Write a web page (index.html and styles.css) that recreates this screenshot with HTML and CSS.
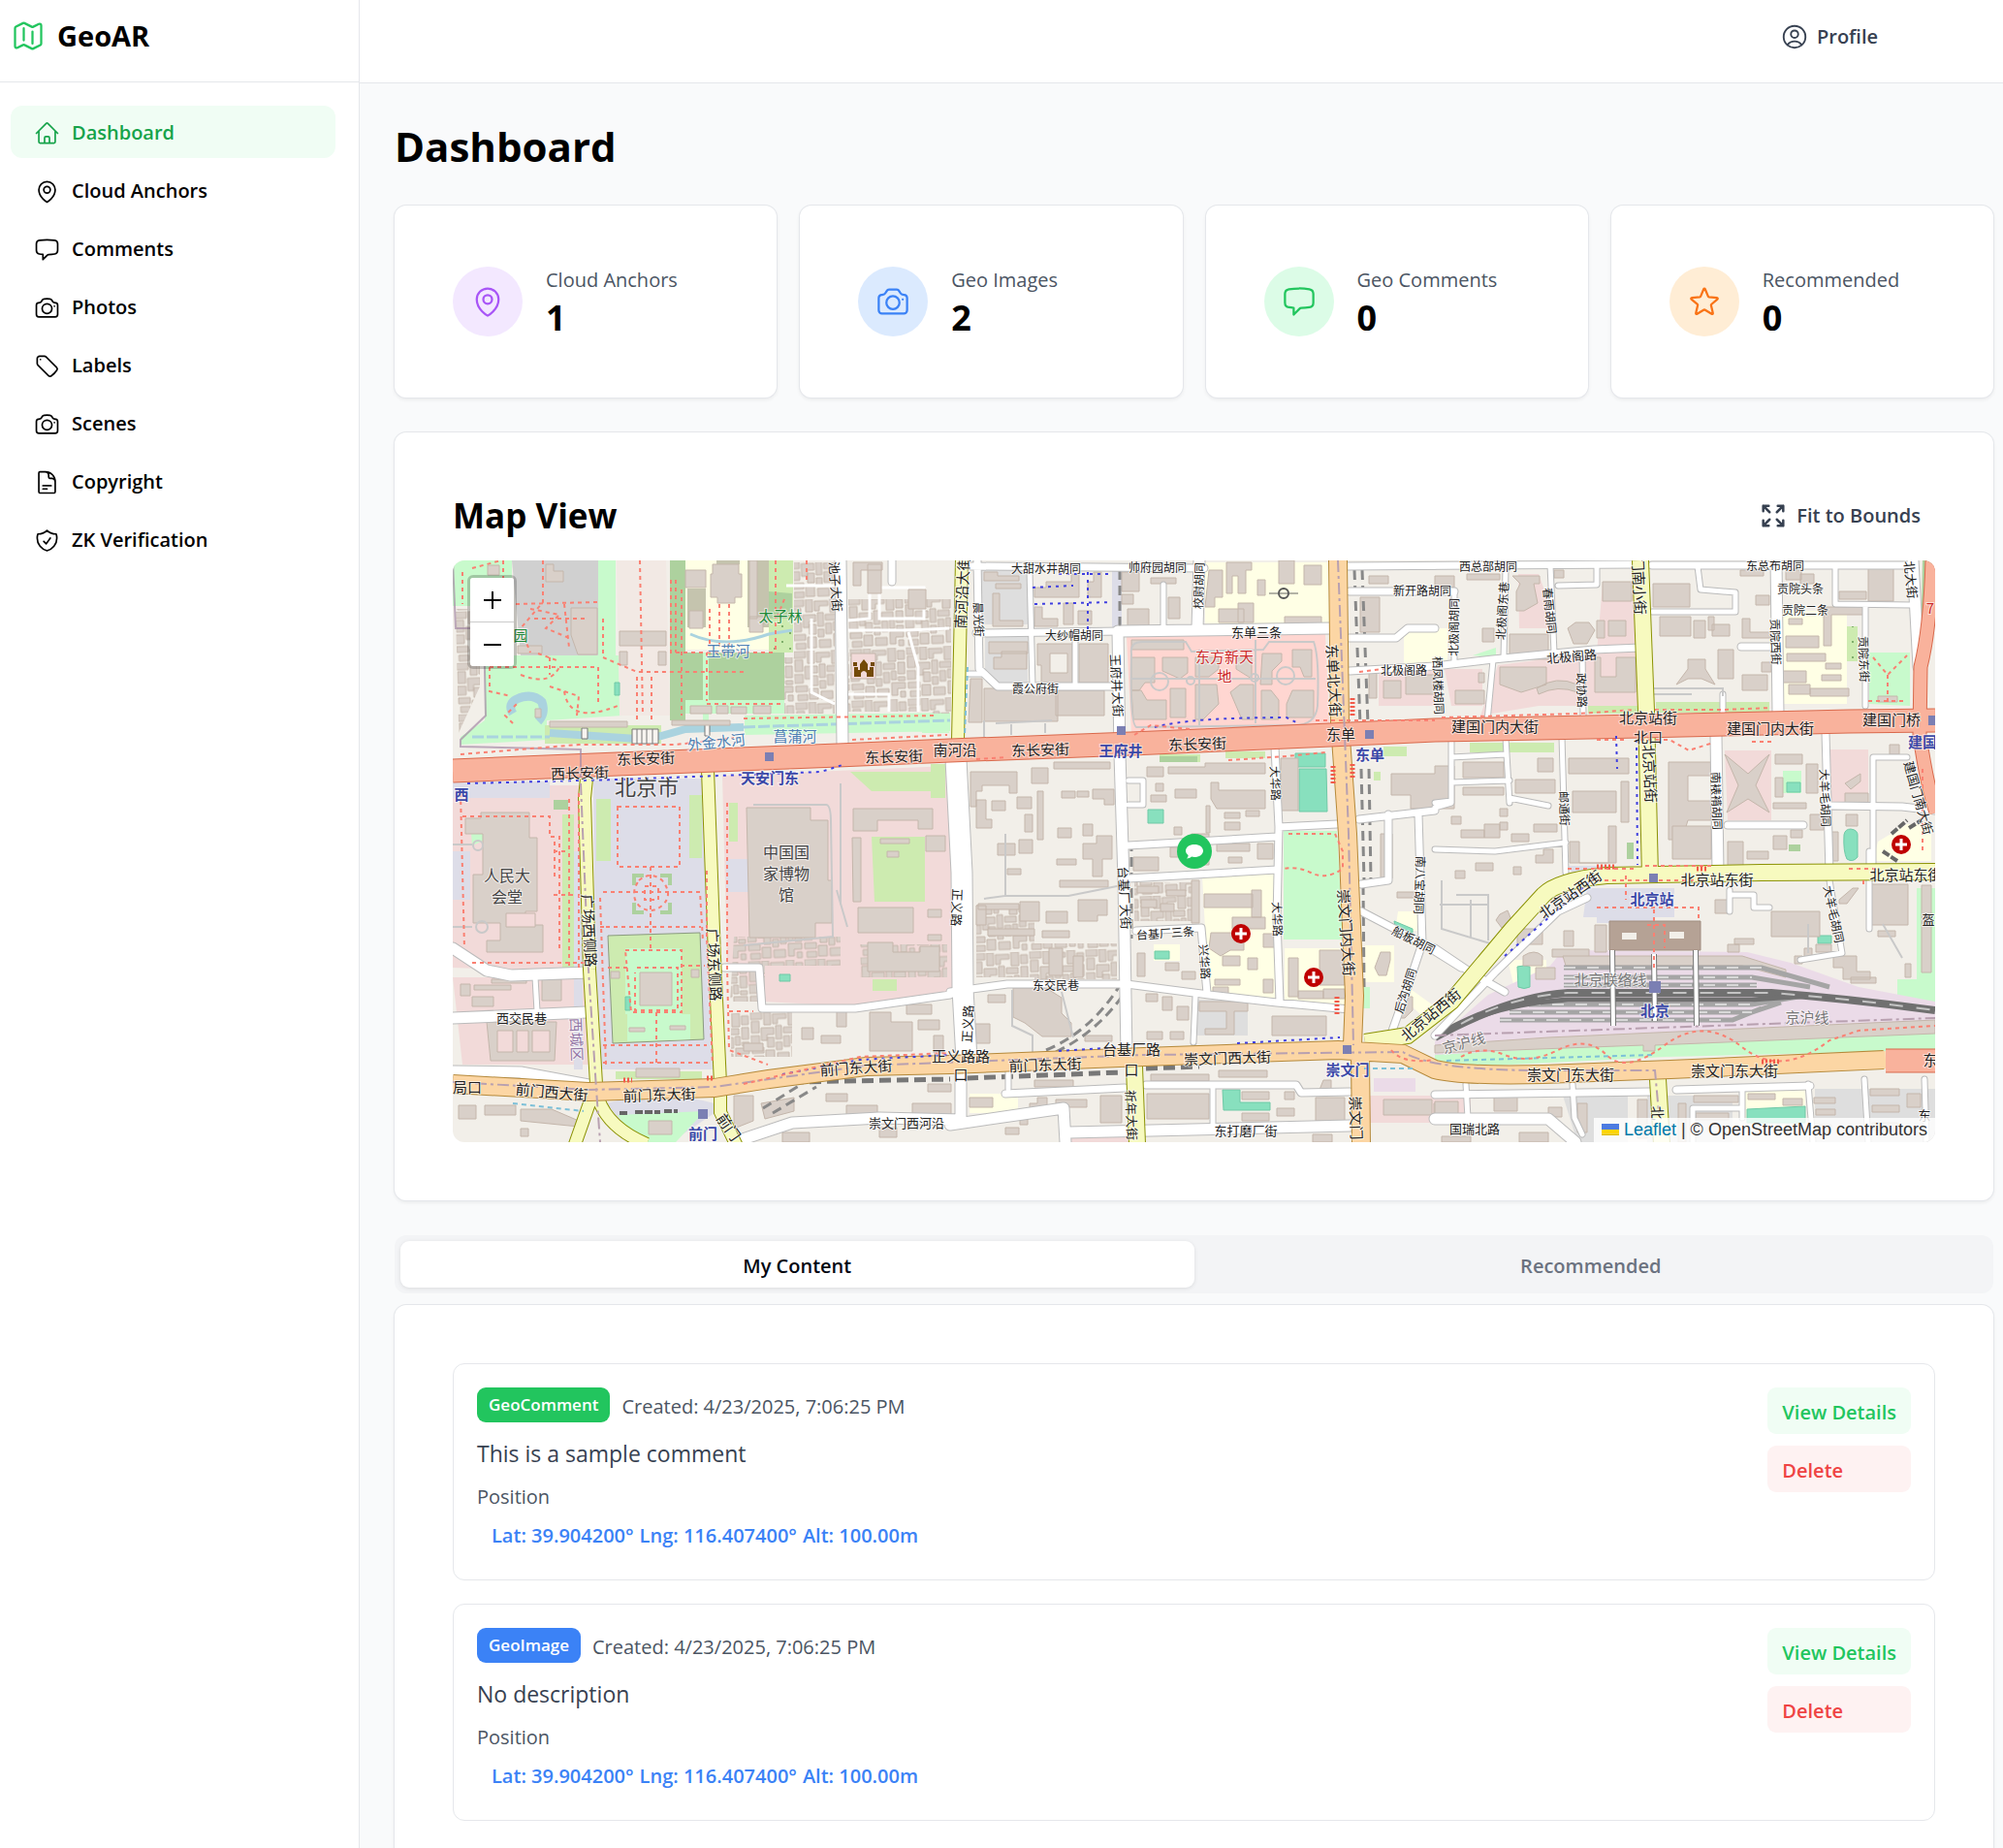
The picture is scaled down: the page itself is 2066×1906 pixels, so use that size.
FILE: index.html
```html
<!DOCTYPE html>
<html lang="en">
<head>
<meta charset="utf-8">
<meta name="viewport" content="width=device-width, initial-scale=1">
<title>GeoAR Dashboard</title>
<link rel="stylesheet" href="styles.css">
</head>
<body>
<svg class="sprite" aria-hidden="true">
  <symbol id="i-map" viewBox="0 0 24 24"><path d="M9 6.75V15m6-6v8.25m.503 3.498 4.875-2.437c.381-.19.622-.58.622-1.006V4.82c0-.836-.88-1.38-1.628-1.006l-3.869 1.934c-.317.159-.69.159-1.006 0L9.503 3.252a1.125 1.125 0 0 0-1.006 0L3.622 5.689C3.24 5.88 3 6.27 3 6.695V19.18c0 .836.88 1.38 1.628 1.006l3.869-1.934c.317-.159.69-.159 1.006 0l4.994 2.497c.317.158.69.158 1.006 0Z"/></symbol>
  <symbol id="i-home" viewBox="0 0 24 24"><path d="m2.25 12 8.954-8.955c.44-.439 1.152-.439 1.591 0L21.75 12M4.5 9.75v10.125c0 .621.504 1.125 1.125 1.125H9.75v-4.875c0-.621.504-1.125 1.125-1.125h2.25c.621 0 1.125.504 1.125 1.125V21h4.125c.621 0 1.125-.504 1.125-1.125V9.75M8.25 21h8.25"/></symbol>
  <symbol id="i-pin" viewBox="0 0 24 24"><path d="M15 10.5a3 3 0 1 1-6 0 3 3 0 0 1 6 0Z"/><path d="M19.5 10.5c0 7.142-7.5 11.25-7.5 11.25S4.5 17.642 4.5 10.5a7.5 7.5 0 1 1 15 0Z"/></symbol>
  <symbol id="i-chat" viewBox="0 0 24 24"><path d="M2.25 12.76c0 1.6 1.123 2.994 2.707 3.227 1.087.16 2.185.283 3.293.369V21l4.076-4.076a1.526 1.526 0 0 1 1.037-.443 48.282 48.282 0 0 0 5.68-.494c1.584-.233 2.707-1.626 2.707-3.228V6.741c0-1.602-1.123-2.995-2.707-3.228A48.394 48.394 0 0 0 12 3c-2.392 0-4.744.175-7.043.513C3.373 3.746 2.25 5.14 2.25 6.741v6.018Z"/></symbol>
  <symbol id="i-camera" viewBox="0 0 24 24"><path d="M6.827 6.175A2.31 2.31 0 0 1 5.186 7.23c-.38.054-.757.112-1.134.175C2.999 7.58 2.25 8.507 2.25 9.574V18a2.25 2.25 0 0 0 2.25 2.25h15A2.25 2.25 0 0 0 21.75 18V9.574c0-1.067-.75-1.994-1.802-2.169a47.865 47.865 0 0 0-1.134-.175 2.31 2.31 0 0 1-1.64-1.055l-.822-1.316a2.192 2.192 0 0 0-1.736-1.039 48.774 48.774 0 0 0-5.232 0 2.192 2.192 0 0 0-1.736 1.039l-.821 1.316Z"/><path d="M16.5 12.75a4.5 4.5 0 1 1-9 0 4.5 4.5 0 0 1 9 0ZM18.75 10.5h.008v.008h-.008V10.5Z"/></symbol>
  <symbol id="i-tag" viewBox="0 0 24 24"><path d="M9.568 3H5.25A2.25 2.25 0 0 0 3 5.25v4.318c0 .597.237 1.17.659 1.591l9.581 9.581c.699.699 1.78.872 2.607.33a18.095 18.095 0 0 0 5.223-5.223c.542-.827.369-1.908-.33-2.607L11.16 3.66A2.25 2.25 0 0 0 9.568 3Z"/><path d="M6 6h.008v.008H6V6Z"/></symbol>
  <symbol id="i-doc" viewBox="0 0 24 24"><path d="M19.5 14.25v-2.625a3.375 3.375 0 0 0-3.375-3.375h-1.5A1.125 1.125 0 0 1 13.5 7.125v-1.5a3.375 3.375 0 0 0-3.375-3.375H8.25m0 12.75h7.5m-7.5 3H12M10.5 2.25H5.625c-.621 0-1.125.504-1.125 1.125v17.25c0 .621.504 1.125 1.125 1.125h12.75c.621 0 1.125-.504 1.125-1.125V11.25a9 9 0 0 0-9-9Z"/></symbol>
  <symbol id="i-shield" viewBox="0 0 24 24"><path d="M9 12.75 11.25 15 15 9.75m-3-7.036A11.959 11.959 0 0 1 3.598 6 11.99 11.99 0 0 0 3 9.749c0 5.592 3.824 10.29 9 11.623 5.176-1.332 9-6.03 9-11.622 0-1.31-.21-2.571-.598-3.751h-.152c-3.196 0-6.1-1.248-8.25-3.285Z"/></symbol>
  <symbol id="i-user" viewBox="0 0 24 24"><path d="M17.982 18.725A7.488 7.488 0 0 0 12 15.75a7.488 7.488 0 0 0-5.982 2.975m11.963 0a9 9 0 1 0-11.963 0m11.963 0A8.966 8.966 0 0 1 12 21a8.966 8.966 0 0 1-5.982-2.275M15 9.75a3 3 0 1 1-6 0 3 3 0 0 1 6 0Z"/></symbol>
  <symbol id="i-star" viewBox="0 0 24 24"><path d="M11.48 3.499a.562.562 0 0 1 1.04 0l2.125 5.111a.563.563 0 0 0 .475.345l5.518.442c.499.04.701.663.321.988l-4.204 3.602a.563.563 0 0 0-.182.557l1.285 5.385a.562.562 0 0 1-.84.61l-4.725-2.885a.562.562 0 0 0-.586 0L6.982 20.54a.562.562 0 0 1-.84-.61l1.285-5.386a.562.562 0 0 0-.182-.557l-4.204-3.602a.562.562 0 0 1 .321-.988l5.518-.442a.563.563 0 0 0 .475-.345L11.48 3.5Z"/></symbol>
  <symbol id="i-expand" viewBox="0 0 24 24"><path d="M3.75 3.75v4.5m0-4.5h4.5m-4.5 0L9 9M3.75 20.25v-4.5m0 4.5h4.5m-4.5 0L9 15M20.25 3.75h-4.5m4.5 0v4.5m0-4.5L15 9m5.25 11.25h-4.5m4.5 0v-4.5m0 4.5L15 15"/></symbol>
</svg>

<div class="app">
  <aside class="sidebar">
    <a class="brand" href="#"><svg class="icon icon-lg"><use href="#i-map"/></svg><span>GeoAR</span></a>
    <nav class="nav" aria-label="Main">
      <a class="nav-item is-active" href="#" aria-current="page"><svg class="icon icon-nav"><use href="#i-home"/></svg>Dashboard</a>
      <a class="nav-item" href="#"><svg class="icon icon-nav"><use href="#i-pin"/></svg>Cloud Anchors</a>
      <a class="nav-item" href="#"><svg class="icon icon-nav"><use href="#i-chat"/></svg>Comments</a>
      <a class="nav-item" href="#"><svg class="icon icon-nav"><use href="#i-camera"/></svg>Photos</a>
      <a class="nav-item" href="#"><svg class="icon icon-nav"><use href="#i-tag"/></svg>Labels</a>
      <a class="nav-item" href="#"><svg class="icon icon-nav"><use href="#i-camera"/></svg>Scenes</a>
      <a class="nav-item" href="#"><svg class="icon icon-nav"><use href="#i-doc"/></svg>Copyright</a>
      <a class="nav-item" href="#"><svg class="icon icon-nav"><use href="#i-shield"/></svg>ZK Verification</a>
    </nav>
  </aside>

  <div class="page">
    <header class="topbar">
      <button class="profile" type="button"><svg class="icon icon-md"><use href="#i-user"/></svg>Profile</button>
    </header>

    <main class="main">
      <h1 class="page-title">Dashboard</h1>

      <section class="stats" aria-label="Statistics">
        <div class="card stat"><span class="bubble purple"><svg class="icon icon-lg"><use href="#i-pin"/></svg></span><div class="stat-text"><p class="stat-label">Cloud Anchors</p><p class="stat-value">1</p></div></div>
        <div class="card stat"><span class="bubble blue"><svg class="icon icon-lg"><use href="#i-camera"/></svg></span><div class="stat-text"><p class="stat-label">Geo Images</p><p class="stat-value">2</p></div></div>
        <div class="card stat"><span class="bubble green"><svg class="icon icon-lg"><use href="#i-chat"/></svg></span><div class="stat-text"><p class="stat-label">Geo Comments</p><p class="stat-value">0</p></div></div>
        <div class="card stat"><span class="bubble orange"><svg class="icon icon-lg"><use href="#i-star"/></svg></span><div class="stat-text"><p class="stat-label">Recommended</p><p class="stat-value">0</p></div></div>
      </section>

      <section class="card map-card">
        <div class="map-head">
          <h2 class="section-title">Map View</h2>
          <button class="fit" type="button"><svg class="icon icon-md icon-bold"><use href="#i-expand"/></svg>Fit to Bounds</button>
        </div>
        <div class="map">
          <svg class="tiles" viewBox="0 0 1529 600" preserveAspectRatio="xMidYMid slice" role="img" aria-label="Street map of central Beijing">
            <defs>
              <pattern id="hutong" width="58" height="53" patternUnits="userSpaceOnUse" patternTransform="rotate(-2)">
                <path class="bld" d="M0 0h12v7h-12zM14 0h7v13h-7zM23 2h14v5h-9v5h-5zM39 0h8v14h-8zM49 3h7v9h-7zM1 9h8v12h-8zM11 16h13v7h-7v6h-6zM26 14h6v14h-6zM34 16h12v6h-12zM49 15h7v12h-7zM0 24h9v9h-9zM17 26h7v10h-7zM34 25h6v11h-6zM42 24h5v9h-5zM26 31h6v8h-6zM1 36h12v6h-12zM15 39h9v11h-9zM42 36h14v6h-8v7h-6zM27 42h12v8h-12zM49 30h7v4h-7zM3 45h10v6h-10zM51 45h5v6h-5z"/>
              </pattern>
              <pattern id="trees" width="16" height="16" patternUnits="userSpaceOnUse">
                <path fill="#7fae6b" d="M3 3h2v2h-2zM11 10h2v2h-2z"/>
              </pattern>
              <g id="r5">
                <path d="M595 10L598 130M642 80V128M528 117H545M733 25V72M1033 32V107M1086 8L1084 100M1132 5L1136 95M1073 103L1067 166M1165 95L1166 160M1237 53H1323V33L1287 30 1284 6M1310 138V160M1426 5V45L1505 46M1457 48V150M1030 185V250L1013 255M1086 183L1090 250M1144 182L1148 322M1030 203L1086 200M1030 229L1090 227M1013 298L1075 300 1148 291M1090 245L1130 253M1465 320V203H1500M1420 330L1433 405 1390 412M1461 300V380M1317 340V362M1318 345H1342V358H1358M1045 540L1047 575M1155 540L1157 575 1165 592M1330 545V575M1279 600V565H1330M1398 540L1403 600M1456 535L1460 600M1518 535L1520 600M697 227H712V252H697M85 430L87 465M766 450L764 497M784 545V588M573 525V545M1180 4V25L1140 26M936 6H1013M1013 250L1030 248"/>
              </g>
              <g id="r7">
                <path d="M535 6L775 8M541 0L543 112 562 130H684M540 75L690 73M922 6L1222 4M1237 5H1506M925 32H1033M925 80H973L985 70H1013M925 114L1013 109 1073 102 1177 92 1225 90M1329 89H1362M1416 178L1420 322M1315 273H1393M1422 253L1495 254 1529 258M1013 400L1050 425 1085 445M1013 490L1075 425 1140 362 1170 348M848 193L852 275 850 370 853 455M852 275L912 272M697 294L850 285M697 328L850 319M935 267L1013 258M965 262V330L937 334M513 445L572 437H695L780 448 850 456 925 463M705 382L772 379 778 446M996 262L1000 395 985 440 968 488M937 362L1000 395 1040 420M570 550L693 544M715 541H870L875 549 925 548M280 420H316L319 462H415L513 448M1013 551L1235 548M1262 546L1400 542M453 0V22"/>
              </g>
              <g id="r11">
                <path d="M686 73L688 200 692 330 695 510M690 73L905 70M770 0L768 70M400 0L402 190M1365 0L1367 158M1506 0L1512 110M1303 180L1305 322M0 400L35 423 60 428 140 425M0 472L138 466M0 527L70 528 140 541M290 600L350 580 440 575 525 577M524 530V580M513 582L630 565 632 600M635 590L925 583M1013 576H1130L1158 600"/>
              </g>
            </defs>

            <rect width="1529" height="600" fill="#f2efe9"/>

            <!-- land use -->
            <path fill="#f2dad9" d="M0 232H132L142 425 0 420zM0 430H140L146 520H10zM278 222L512 212 517 445 415 460 320 455 283 415zM1099 14H1120L1140 70H1100zM1186 24H1222V150H1120L1060 160 1078 108 1180 95zM1023 112H1062V150H1030zM955 110H1013V150H955zM1312 196H1360V268H1315zM1420 195H1460V250H1422zM945 552H1050V580H945zM632 588H700V600H632zM1013 555H1042V574H1013z"/>
            <path fill="#dddde8" d="M145 225H262L270 525H148zM125 300H134V525H125zM0 300H18V350H0zM158 560Q215 545 270 560V570L225 600H190zM282 308H306V342H282zM1170 338H1260V368H1240V374H1180V368H1166zM680 8H690V70H680zM1150 315H1200V325L1160 330zM0 228H100V245H0z"/>
            <path fill="#c8facc" d="M0 0H61V47H0zM33 98H172L175 160 97 165V185L8 190V182L33 165zM150 0H168V98H150zM301 160L513 157V176L301 180zM857 279L912 279 918 391H857zM1461 95H1503V150L1461 148zM1052 98L1076 90V100zM1372 217H1391V240H1372zM1510 338H1529V455H1490V432H1510zM1013 505L1529 482V505L1250 512 1013 524zM170 572L260 568 230 600H190zM484 160H512V178H484zM935 440H946V462H935zM18 268H34V288L20 294z"/>
            <path fill="#cdebb0" d="M326 0H351V95H326zM113 262H125V430H113zM148 246H163V310H148zM244 242H257V307H244zM432 285H487V352H435zM410 218H500V238H432zM285 250H294V290H285zM763 173L880 168V174H763zM729 200H771V208H729zM797 197H838V204H797zM433 432H458V444H433zM493 210H508V245H493zM960 192H984V202H960zM1049 188H1136V198H1049zM1171 150H1230V158H1171zM1241 146H1358V157H1241zM1425 68H1449V104H1425zM95 170H215V189H95zM168 527H257V535H168zM950 218H957V227H950z"/>
            <path fill="#cdebb0" stroke="#8a9a80" d="M160 387L255 384 259 494 165 498z"/>
            <path fill="#c8facc" d="M178 400H236V468H245V494L180 496V468H178z"/>
            <path fill="#add19e" d="M185 323h12v4h-8v8h-4zM226 323h-12v4h8v8h4zM185 365h12v-4h-8v-8h-4zM226 365h-12v-4h8v-8h4z"/>
            <path fill="#add19e" d="M224 0H240V165H224zM224 95H342V145H224zM1516 0H1526V60L1514 90zM104 247H119V257H104zM729 202H768V208H729zM1378 293H1390V300H1378zM1211 291H1218V308H1211zM326 32L350 34V60H326z"/>
            <path fill="#c8facc" d="M258 95H264V165H258zM240 144H342V158H240z"/>
            <rect x="1425" y="68" width="24" height="36" fill="url(#trees)"/>
            <rect x="328" y="64" width="22" height="30" fill="url(#trees)"/>
            <path fill="#d0d0d0" d="M61 0H150V98H70z"/>
            <path fill="#dedede" d="M545 10H593V66H545zM549 76H593V130H560L549 112zM769 453H820V490H766zM1145 552H1212V600H1160zM1232 552H1320V600H1232zM1405 545H1529V600H1405z"/>
            <path fill="#f2e9e4" d="M169 0H220L224 160H172z"/>
            <path fill="#ffffe5" d="M240 0H326V92H240zM776 2H905V65H776zM981 70H1026V107H981zM773 326L848 322V452H780zM858 400H920V460H858zM941 397H971V435H941zM723 396H750V413H723zM533 550H583V570H533zM1363 52H1438V148H1370zM1332 545H1395V575H1332zM1470 290L1500 272H1525V310H1465zM1088 412H1128V445H1096zM985 440L1010 458 1000 470 984 455zM975 362H996V382H972z"/>
            <path fill="#c5c4ae" d="M242 29H261V69H242zM304 0H326V69H304zM272 0H296V4H272z"/>
            <path fill="#ffd6d1" d="M695 79L900 74 904 168 700 180z"/>
            <path fill="#ebdbe8" d="M1013 496L1068 448 1132 418 1145 402 1335 404 1380 415 1450 440 1529 455V482L1013 510zM950 534H993V548H950z"/>
            <path fill="#88e0be" stroke="#6fc9a6" d="M869 199H900V213H869zM873 215H901L902 259H873zM717 257H733V271H717zM724 403H739V411H724zM794 546H812V559H843V567H795zM1098 419Q1105 417 1111 419V440Q1105 443 1099 440zM1435 283Q1436 277 1442 277Q1450 278 1449 285V306Q1444 312 1438 308Q1434 300 1435 283zM1335 566L1395 563V580H1335zM1376 229H1390V239H1376zM1408 387H1422V395H1408zM337 427H348V434H337zM178 450H183V464H178zM971 372L990 380V384L972 378zM167 126H172V139H167z"/>

            <!-- water -->
            <g fill="none" stroke="#aad3df">
              <path stroke-width="8" d="M100 178L190 184 215 181 240 174 300 172"/>
              <path stroke-width="3" d="M300 172L513 165M20 182H100" stroke-dasharray="12 3"/>
              <path stroke-width="3" d="M245 76Q280 92 326 76L350 72"/>
              <path stroke-width="9" d="M62 158Q56 148 66 143Q82 136 92 146Q96 158 88 166"/>
            </g>
            <path fill="#f7f4f0" stroke="#777" d="M185 174h27v15h-27zM133 173h6v11h-6zM260 168h5v13h-5z"/>
            <path stroke="#777" d="M190 174v15M195 174v15M200 174v15M206 174v15"/>

            <!-- dense courtyards -->
            <path fill="url(#hutong)" d="M352 2H394V158H342V100H352zM408 40H514V156H408zM494 60H512V158H494zM3 50H28V130L6 178zM290 388H400V418H322V455H286zM420 396H510V430H420zM287 466H350V512H287zM540 355H600V430H540zM600 395H685V432H600zM703 332H770V372H703z"/>
            <path fill="none" stroke="#fff" stroke-width="3" d="M408 72H470L512 70M344 26H394M370 60V136L394 148M408 62L430 60V34M470 74L480 110V156M408 138H450V156M440 28H486V60H440z"/>
            <path fill="#f2dad9" stroke="#c4b6ab" d="M411 96H436V122H411z"/>

            <!-- buildings -->
            <path class="bld" d="M96 4h8v7h10v11h-18zM122 49h27v48h-20l-7-20zM67 88h25v8h-25zM172 73h48v15h-48zM268 4h27v10h3v24h-7v6h-18v-6h-7v-24h2zM240 10h21v18h-21zM306 0h8v60h-8zM244 52h14v18h-14zM306 58h14v16h-14zM245 150h22v8h-22zM272 150h12v8h-12zM287 151h16v7h-16zM310 150h18v8h-18zM413 2h30v8h-22v16h-8zM428 4h14v30h-14zM470 30h18v20h-18zM100 166h80v6h-80zM226 165h60v5h-60zM36 5h12v10h-12zM172 94h8v14h-8zM212 94h8v14h-8zM85 153h6v9h-6z"/>
            <path class="bld" d="M13 266h16v-6h50v26h8v76h-12v14h18v28h-58v-12h14v-18h-28v-50h10v-42h-18zM303 255h66v13h18v62h4v44h-17v15h-68zM413 256h82v21h-15v-9h-42v11h-25zM412 286h9v66h-8zM418 358h57v26h-57zM441 287h30v5h-30zM448 300h12v6h-12zM490 360h14v8h-14zM490 386h14v6h-14zM488 284h20v16h-20zM428 394h26v10h28v-6h20v26h-74zM193 425h33v34h-33zM35 476h72l-2 40h-66zM8 437h10v12h-10zM22 438h38v5h-38zM40 432h36v4h-36zM20 450h22v10h-22zM92 432h20v22h-20zM189 524h45v9h-45zM430 466h22v10h22v30h-44zM468 458h26v10h-26zM480 474h22v10h-22zM496 490h10v18h-10zM300 498h20v8h-20zM360 482h12v12h-12zM380 490h20v8h-20zM396 465h10v16h-10zM6 562h18v14h-18zM33 562h32v10h-32zM70 566h32l28 12v6l-60-6zM70 586h8v8h-8zM202 578h24v14h-24zM290 552h20v26l-20 8zM318 560l34-6v14l-30 8zM340 590h28v10h-28zM406 562h32v10h-32zM385 550h22v8h-22zM474 560h40v12h-40zM440 585h18v10h-18zM490 540h24v8h-24zM163 424h9v7h-9zM246 422h8v8h-8zM182 482h16v4h-16zM224 480h16v4h-16z"/>
            <path class="bld" d="M557 34h7v28h24v6h-31zM548 12h14v4h22v5h-36zM560 24h26v5h-26zM600 28h12v-6h26v-8h8v24h-46zM655 22h6v-10h8v26h-14zM553 84h40v12h-40zM558 100h8v-6h26v18h-34zM603 86h36v42h-32v-20h-4zM646 86h30v40h-30zM534 122h12v45h-14zM548 132h76v34h-76zM622 134h50v26h-50zM690 12h18v20h-18zM696 50h22v20h-22zM720 18h26v6h-26zM738 38h12v22h-12zM690 35h12v10h-12zM600 48h8v12h16v8h-24zM630 44h10v22h-10zM645 52h14v14h-14zM780 10h14v28h-8v10h-10zM798 2h26v8h-6v24h-8v-18h-6v18h-6zM790 50h26v14h-26zM830 20h8v16h-8zM852 0h16v24h-16zM878 5h18v20h-18zM810 44h16v20h-16zM858 58h38v7h-38zM700 82h54v10h-54zM700 100h24v26h-10l-6 8h-8zM732 100h26v16l-8 6-18-8zM700 134h10l6 10h20v20h-34zM740 132h16v30h-16zM766 128h22l2 20-16 16h-8zM802 136l10-8h14v36h-12zM766 100h24v12l-10 8h-14zM808 100h16v22l-16-10zM835 96h20v8l-10 10v14h-12zM866 92h20v28h-8l-4-10h-8zM834 134h10l8 10v20h-18zM866 134h22v28h-28v-14z"/>
            <path class="bld" d="M534 218h48v22h-8v-8h-28v6h-6v16h-6zM597 214h17v16h-17zM620 208h58v7h-58zM540 247h10v20h6v9h-16zM556 248h14v10h-14zM582 244h15v12h-15zM603 238h6v50h-6zM628 238h14v7h-14zM644 238h12v6h-12zM660 236h22v16h-10v-6h-12zM590 262h8v18h-8zM624 276h14v10h-14zM650 272h10v12h-10zM562 292h18v12h-18zM584 288h14v14h-14zM623 308h20v6h-20zM650 292h14v-8h16v24h-10v18h-10v-18h-10zM572 318h14v6h-14zM626 330h50v7h-50zM542 354h42v6h-42zM540 356h10v20h-10zM585 352h20v20h-20zM612 362h22v12h-22zM645 350h30v16h-10v6h-20zM552 380h48v7h-48zM608 382h28v7h-28zM716 213h17v10h-17zM738 213h38v-4h62v11h-100zM725 230h8v8h-8zM720 242h16v7h-16zM745 236h22v9h-22zM782 229h8v8h48v19h-50l-6-10zM777 253h4v28h-4zM796 260h16v6h-16zM818 258h14v6h-14zM796 270h16v8h-16zM744 275h8v8h-8zM762 282h18v6h-18zM702 306h26v14h-26zM740 296h14v10h-14zM760 300h20v14h-20zM788 292h34v8h-34zM830 292h16v16h-16zM800 306h14v6h-14zM854 204h18v54h-18zM706 336h22v7h-22zM736 340h20v6h-20zM762 330h8v44h-8zM710 350h16v8h-16zM730 354h14v8h-14zM775 344h50v14h-50zM824 340h10v28h-10zM804 368h34v12h-34zM836 385h12v14h-12zM782 384h24l10 10v8h-14l-10 6-12-8zM794 408h18v10h-18zM820 410h10v12h-10zM786 432h26v6h-26zM836 432h10v14h-10zM706 405h8v24h-8zM735 415h14v8h-14zM752 424h14v8h-14zM784 440h16v8h-16zM862 410h10v40h-10zM872 444h26v8h-26zM894 402h26v36h-26zM898 442h22v10h-22zM957 404h10v8l-4 16h-8l-4-8zM974 342h26v6h-26zM980 450h10v14l-8 8h-6z"/>
            <path class="bld" d="M578 441h34l16 10v16l10 10v14h-30l-18-14-12-6zM552 448h18v8h-18zM538 478h16v20h-16zM640 408h10v22h-10zM615 400h14v28h-14zM715 447h12v8h-12zM732 450h10v14h-10zM747 460h12v14h-12zM716 486h16v8h-16zM740 486h14v8h-14zM770 455h50v10h-14v24h-30v-6h22v-18h-28zM845 470h56v20h-56zM652 490h28v6h-28zM533 554h24v10h-24zM595 560h8v-6h10v18h-18zM622 556h32v8h-32zM668 552h22v28h-22zM716 550h64v26h-64zM814 548h28v8h-28zM858 548h10v8h-10zM814 570h28v8h-28zM850 565h18v8h-18zM890 554h30v24h-30zM898 536h8v10h-12zM960 556h50v16h-50zM1012 560h24v12h-24zM600 536h40v7h-40zM720 530h60v7h-60zM790 526h50v7h-50zM570 585h14v7h-14zM585 574h8v8h-8zM887 592h20v8h-20z"/>
            <path class="bld" d="M945 16h20v8h-20zM936 38h20v36h-20zM1013 16h20v12h-20zM1046 14h34v6h-34zM1093 16h28v8h-6l4 20-14 8h-8v-20l4-8zM1136 10h10v8h-10zM1186 22h30v20h-30zM1238 24h38v24h-38zM1192 62h18v16h-18zM1245 58h32v20h-32zM1280 62h12v18h-12zM1299 66h18v12h-18zM1295 58h6v14h-6zM1328 10h24v6h-24zM1344 36h14v10h-14zM1330 60h8v14h22v6h-30zM1375 10h16v10h-16zM1430 32h28v8h-28zM1460 8h26v34h-26zM1390 14h14v10h-14zM1378 60h14v6h-14zM1375 78h34v12h-34zM1376 96h40v8h-40zM1414 48h44v8h-36v32h-8zM1372 114h24v12h-24zM1416 106h16v6h-16zM1412 118h20v6h-20zM1400 132h40v8h-40zM1378 128h22v10h-22zM1090 76h40v26h-40zM1150 70l8-6h14l6 8-8 14h-14zM1180 62h8v18h-8zM1080 110h48v18l-26 8-22-8zM1118 132q20-14 42-4v8q-20-8-40 2zM1178 100h6v20h16v-20h20v36h-42zM1034 134h30v14h-30zM1058 116h6v10h-6zM945 116h8v26h-8zM983 118h30v20h-30zM960 124h18v18h-18zM1262 128l12-16v-10h18v10l10 16-14-6h-14zM1305 92h16v30h-16zM1330 118h26v16h-26zM1350 105h10v10h-10zM1470 140h20v6h-20zM1062 70h12v14h-12zM968 220h45v-8h20v44h-45v-14h-20zM1042 208h42v16h-42zM1119 204h16v14h-16zM1151 204h62v16h-62zM1096 226h41v14h-41zM1042 234h42v8h-42zM1155 238h45v22h-45zM1205 228h8v42h-8zM1254 208h44v14h-24v26h24v20h-24l-6 20h-14z"/>
            <path class="bld" d="M1312 200l24 20 22-20-14 32 14 28-22-14-22 14 12-28zM1364 200h28v10h-28zM1364 224h8v20h-8zM1396 210h12v30h-12zM1436 230l16-10v8l-10 8zM1436 240h24v10h-24zM1482 190h10v10h-10zM1362 250h34v6h-34zM1315 290h16v26h-16zM1335 300h22v8h-22zM1362 284h14v14h-14zM1380 278h12v8h-12zM1400 262h14v16h-14zM1350 320h30v4h-30zM1421 280h8v30h-8zM1437 262h12v12h-12zM957 282h12v46h-12zM1040 278h24v8h-24zM1064 272h16v14h-16zM1030 264h10v8h-10zM1092 282h18v8h-18zM1080 256h8v8h-8zM1080 270h8v8h-8zM1117 304h8v-6h10v14h-18zM1055 312h18v8h-18zM1094 316h8v8h-8zM1034 320h10v8h-10zM1152 290h10v22h30v-38h8v38h-48zM1115 272h24v8h-24zM1258 274h40v34h-40zM1080 365l8-4 4 10-10 8-6-8zM1098 380h26v16h-26zM1178 376h12v28h-12zM1146 382h10v16h-10zM1134 401h38v8h-38zM1360 362h50v26h-50zM1430 350l14-12h6l-12 16h-8zM1463 334h38v42h-38zM1470 382h18v6h-18zM1515 335h10v90h-10zM1424 408h24v16h14v8h-28v-12h-10zM1406 396h16v8h-16zM1322 390h20v6h-20zM1315 396h12v8h-12zM1384 408h8v8h-8zM1302 350h14v14h-14zM1498 416h6v14h-6zM1442 430h26v6h-26zM1104 408q12-8 20 0v10h-20zM1117 420h20v12h-20zM1394 400h8v10h-8z"/>
            <path class="bld" d="M1013 558h24v16h-24zM1074 552h24v16h-24zM1130 564h14v10h-14zM1160 560h10v30h-10zM1222 556h10v40h-10zM1280 552h46v7h-46zM1282 570h34v7h-34zM1336 550h28v6h-28zM1372 555h20v7h-20zM1404 554h22v6h-22zM1406 566h20v6h-20zM1462 545h30v7h-30zM1464 562h28v7h-28zM1500 550h14v14h-14zM1404 582h18v6h-18zM1464 580h26v8h-26zM1264 560h8v40h-8zM1020 594h30v6h-30zM1100 590h30v10h-30z"/>
            <path fill="#f2dad9" stroke="#c4b6ab" d="M55 364h30v14h-30zM46 485h16v22h-16zM66 485h12v22h-12zM82 485h18v22h-18z"/>
            <path fill="#f2efe9" stroke="#c4b6ab" d="M616 96h18v20h-18z"/>
            <path fill="#b5a295" stroke="#a08d80" d="M1193 372H1287V402H1193z"/>
            <path fill="#f2efe9" d="M1206 384h15v7h-15zM1255 383h15v7h-15z"/>

            <!-- railway -->
            <path class="bld" d="M1145 408H1330L1375 422V430L1330 418H1148zM1013 500L1130 492 1529 474V488L1240 500V506H1228V500L1013 508z"/>
            <g fill="none">
              <path stroke="#a5a5a5" stroke-width="5" d="M1146 420H1350L1420 440M1146 430H1340L1400 440M1146 438H1345M1110 458H1340L1400 448M1090 466H1340L1370 456M1080 474H1320L1350 462"/>
              <path stroke="#d8d8d8" stroke-width="2" stroke-dasharray="12 12" d="M1146 420H1350M1146 430H1340M1146 438H1345M1110 458H1340M1090 466H1340M1080 474H1320"/>
              <path stroke="#707070" stroke-width="8" d="M1013 492Q1090 450 1150 446H1360Q1440 452 1529 464"/>
              <path stroke="#707070" stroke-width="5" d="M1060 470Q1100 456 1150 453H1340L1400 449"/>
              <path stroke="#c4c4c4" stroke-width="2" stroke-dasharray="14 14" d="M1040 478Q1090 450 1150 446H1360Q1440 452 1529 464"/>
              <path stroke="#777" stroke-width="6" d="M1196 402L1197 480M1239 406L1240 475M1282 402L1283 480"/>
              <path stroke="#fff" stroke-width="4" d="M1196 402L1197 480M1239 406L1240 475M1282 402L1283 480"/>
              <path stroke="#888" stroke-width="3" stroke-dasharray="10 6" d="M320 565L360 540M330 570L375 543M612 505Q660 485 690 435M622 507Q668 485 697 440M930 10L936 170M938 10L944 170M937 215L940 330M945 215L947 330M939 335L940 440M700 290V390M688 10V70"/>
              <path stroke="#777" stroke-width="5" stroke-dasharray="12 6" d="M350 538L513 535M530 534L690 528M715 524L770 522"/>
            </g>

            <!-- roads: casing then fill -->
            <g class="casing">
              <use href="#r5" stroke-width="7"/><use href="#r7" stroke-width="9"/><use href="#r11" stroke-width="13"/>
              <path stroke-width="23" d="M519 205L525 322 526 442 530 515"/>
            </g>
            <g class="street">
              <use href="#r5" stroke-width="5"/><use href="#r7" stroke-width="7"/><use href="#r11" stroke-width="11"/>
              <path stroke-width="21" d="M519 205L525 322 526 442 530 515"/>
            </g>
            <g fill="none" stroke="#c9c9c9" stroke-width="2">
              <path d="M618 165L560 168M548 165V182M576 166V180M611 168V178M570 282V346L548 349M570 346H635L690 335M1020 330V380L1070 395M1035 345H1068V392M1050 350V390M1018 355H1068M1475 375L1495 410M1398 375V405M1223 90L1226 138H1278M1226 132H1310V140M770 92V170M828 82V168M700 96Q698 84 712 84H756L762 94 836 92 842 84H888Q894 100 892 150Q890 170 868 170L705 172Q698 168 700 96M700 122H890M0 293H20M0 378H20M396 340L407 378M400 230V355M310 252H385Q390 252 390 270L392 388 300 397M577 443V480L598 490V508M628 445L640 492"/>
              <circle cx="729" cy="125" r="9"/><circle cx="859" cy="119" r="9"/><circle cx="761" cy="124" r="4"/><circle cx="827" cy="121" r="4"/><circle cx="26" cy="294" r="5"/><circle cx="30" cy="378" r="6"/>
            </g>
            <g fill="none" stroke="#8b9204">
              <path stroke-width="14" d="M138 225L136 245 141 422 148 540 125 605M263 216L270 409 276 540V569L293 604M150 555Q160 585 200 602M525 0L521 186"/>
              <path stroke-width="18" d="M703 522L706 602M1225 0L1231 155 1235 326M941 497L985 490 1030 455 1093 380 1125 345Q1140 330 1190 325L1350 322 1529 321M1243 535L1247 602"/>
            </g>
            <g fill="none" stroke="#f7fabf">
              <path stroke-width="12" d="M138 225L136 245 141 422 148 540 125 605M263 216L270 409 276 540V569L293 604M150 555Q160 585 200 602M525 0L521 186"/>
              <path stroke-width="16" d="M703 522L706 602M1225 0L1231 155 1235 326M941 497L985 490 1030 455 1093 380 1125 345Q1140 330 1190 325L1350 322 1529 321M1243 535L1247 602"/>
            </g>
            <g fill="none" stroke="#b5893a">
              <path stroke-width="20" d="M0 540L140 548 270 544 326 535 426 522 513 520 713 512 913 505 980 509 1013 525Q1040 532 1125 530L1256 525 1476 515M913 0L915 169 923 282 930 449 928 500M936 515L937 602"/>
            </g>
            <g fill="none" stroke="#fcd6a4">
              <path stroke-width="18" d="M0 540L140 548 270 544 326 535 426 522 513 520 713 512 913 505 980 509 1013 525Q1040 532 1125 530L1256 525 1478 515M913 0L915 169 923 282 930 449 928 500M936 505L937 602"/>
            </g>
            <g fill="none" stroke="#d9694c">
              <path stroke-width="25" d="M0 217L170 210 397 201 513 196 700 189 905 180 1013 175 1225 171 1440 166 1529 165M1478 516H1529"/>
              <path stroke-width="15" d="M1526 0Q1524 70 1514 110L1513 180Q1520 230 1530 260"/>
            </g>
            <g fill="none" stroke="#f9b29c">
              <path stroke-width="23" d="M0 217L170 210 397 201 513 196 700 189 905 180 1013 175 1225 171 1440 166 1529 165M1478 516H1529"/>
              <path stroke-width="13" d="M1526 0Q1524 70 1514 110L1513 180Q1520 230 1530 260"/>
            </g>

            <!-- boundaries, metro and footways -->
            <g fill="none">
              <path stroke="#b8a0b0" stroke-width="2" stroke-dasharray="12 4 3 4" d="M132 230L140 422 148 545 152 600M0 538L140 546 270 543 426 521 713 510 980 507Q1010 526 1125 526L1240 526 1244 570M913 0L924 282 929 500M1013 490L1529 472"/>
              <path stroke="#a58aa5" stroke-width="2" d="M0 0L3 70H32L34 160 8 185V192L132 195V225" opacity=".7"/>
              <path stroke="#4040e0" stroke-width="2" stroke-dasharray="3 5" d="M15 230L170 226 380 218 405 210M340 530L420 515 513 510M625 506L690 502M809 498L915 492M598 28L640 26M625 14H680M600 45L680 43M655 12V72M724 172Q760 162 860 162L872 168M1200 181L1201 215M1221 185L1222 314M1085 408L1180 325"/>
              <path stroke="#7dc0d8" stroke-width="2" stroke-dasharray="5 4" d="M62 560L135 568M531 110L528 180M1025 516L1240 510M940 524H990"/>
              <path class="foot" d="M10 12V45M20 8L50 0M65 45L150 43M93 0V43L70 70 80 95M115 45L120 90M193 0L196 160M52 0V30M155 60V100L190 115H300M38 110H150V150M38 110V135L60 140M70 118Q100 130 110 110M115 135Q120 170 170 150M225 20V95H330M236 30V160M333 0V95M265 50V90M285 45V92M275 45V90M262 95V145M262 148H340M8 200L130 190 230 190 290 183M412 185L510 180M300 163L500 160M365 0V20M80 50L110 56 96 70 120 80M84 60H140M230 20V95M100 100V118M88 96L110 104M190 120V165M205 120V165M342 40L334 60M62 168L54 160 66 148M100 130L130 140 128 160"/>
              <path class="foot" d="M8 240L12 400M10 264H100V285H110V400M120 246V420M130 240V420M170 254H234V316H170zM155 342H255L258 392M152 348L158 520M262 320V390L268 520M158 378H256M152 378H158M204 316V400M192 330Q204 320 216 330 228 345 216 356 204 366 192 356 182 345 192 330M178 402H236V466H184zM190 420H232V464H188V425M160 420H180M235 418H260M210 466V520M155 518H265M155 500H262M20 415L140 415M283 250V420L285 505 325 520M285 465H310M300 540L420 512 513 508M105 290V330M116 300H106M104 345H124M198 336H212V350H198z"/>
              <path class="foot" d="M540 205L570 203M703 180L720 170 760 174M800 206L860 202 900 198M890 165H1013M935 115L960 112M940 205L960 198M1020 162L1160 158 1220 154M1240 154H1310L1360 152M1180 185H1210M1225 185H1255L1275 196 1300 188M1465 100L1480 118 1500 98M1480 118V150M1460 145H1500M1340 187H1360M1440 318H1470M862 282H910L918 300V318Q900 330 885 322 870 315 857 318M1150 318H1220M1230 315H1300M1172 330H1280M1180 358H1285V370M1239 360V420M1232 376H1250V400M1040 512Q1060 500 1085 510T1140 505T1190 510T1250 500T1330 502T1420 495L1450 485 1529 480M1210 325V350M968 505Q980 520 1013 515M1455 330V338M1516 215V300"/>
              <path stroke="#f25a4a" stroke-width="5" stroke-dasharray="2 2" d="M928 142V160M908 212V232M928 210V225M912 450V470M1180 316H1200M1283 318H1295M1350 517H1368M176 536H185M262 534H268"/>
              <path stroke="#666" stroke-width="4" stroke-dasharray="8 2" d="M172 570H182M188 569H214M218 568H232M1484 282L1500 268M1475 300L1490 310M1502 276L1515 268"/>
            </g>

            <!-- stations, hospitals, landmark -->
            <path fill="#7b7fb3" d="M322 198h9v9h-9zM685 171h9v9h-9zM941 175h9v9h-9zM918 500h9v9h-9zM1234 323h9v9h-9zM1234 434h12v12h-12zM253 566h10v10h-10zM1522 160h7v10h-7z"/>
            <g fill="#bf0000"><circle cx="813" cy="385" r="10"/><circle cx="888" cy="430" r="10"/><circle cx="1494" cy="293" r="10"/></g>
            <path stroke="#fff" stroke-width="3" d="M807 385h12M813 379v12M882 430h12M888 424v12M1488 293h12M1494 287v12"/>
            <path fill="#734a08" d="M414 120v-10h4v3h2v-6l4-5 4 5v6h2v-3h4v10h-7v-4q-3-4-6 0v4zM413 105h4v4h-4zM431 105h4v4h-4z"/>
            <circle cx="857" cy="34" r="5" fill="none" stroke="#555" stroke-width="2"/><path stroke="#666" stroke-width="1" d="M842 34H872"/>

            <!-- labels -->
            <g class="lbl s12">
              <text x="612" y="13">大甜水井胡同</text><text x="727" y="12">帅府园胡同</text><text x="641" y="82">大纱帽胡同</text><text x="601" y="137">霞公府街</text>
              <text x="1000" y="36">新开路胡同</text><text x="981" y="118">北极阁路</text><text x="1068" y="11">西总部胡同</text><text x="1364" y="10">东总布胡同</text>
              <text x="1390" y="34">贡院头条</text><text x="1395" y="56">贡院二条</text><text x="735" y="389" transform="rotate(-4 735 385)">台基厂三条</text><text x="622" y="443">东交民巷</text>
              <text x="542" y="65" transform="rotate(88 542 61)">晨光街</text><text x="848" y="234" transform="rotate(88 848 230)">大华路</text><text x="850" y="374" transform="rotate(88 850 370)">大华路</text><text x="775" y="418" transform="rotate(86 775 414)">兴华路</text>
              <text x="1033" y="73" transform="rotate(-89 1033 69)">北极阁胡同</text><text x="1083" y="56" transform="rotate(-86 1083 52)">北极阁东巷</text><text x="1131" y="56" transform="rotate(84 1131 52)">春雨胡同</text><text x="1164" y="138" transform="rotate(88 1164 134)">政协路</text>
              <text x="1364" y="88" transform="rotate(88 1364 84)">贡院西街</text><text x="1455" y="106" transform="rotate(88 1455 102)">贡院东街</text><text x="1146" y="260" transform="rotate(88 1146 256)">邮通街</text><text x="1303" y="252" transform="rotate(88 1303 248)">南裱褙胡同</text>
              <text x="1415" y="249" transform="rotate(88 1415 245)">大羊毛胡同</text><text x="1424" y="369" transform="rotate(78 1424 365)">大羊毛胡同</text><text x="997" y="339" transform="rotate(92 997 335)">南八宝胡同</text><text x="991" y="396" transform="rotate(27 991 392)">船板胡同</text>
              <text x="983" y="448" transform="rotate(-72 983 444)">后沟胡同</text><text x="770" y="30" transform="rotate(-88 770 26)">校尉胡同</text><text x="1016" y="133" transform="rotate(88 1016 129)">栖凤楼胡同</text>
            </g>
            <g class="lbl s13">
              <text x="829" y="79">东单三条</text><text x="1154" y="104" transform="rotate(-5 1154 99)">北极阁路</text><text x="71" y="477">西交民巷</text><text x="468" y="585">崇文门西河沿</text><text x="818" y="593">东打磨厂街</text><text x="1054" y="591">国瑞北路</text>
              <text x="395" y="32" transform="rotate(86 395 27)">池子大街</text><text x="685" y="134" transform="rotate(87 685 129)">王府井大街</text><text x="693" y="353" transform="rotate(87 693 348)">台基厂大街</text><text x="520" y="363" transform="rotate(92 520 358)">正义路</text>
              <text x="531" y="483" transform="rotate(-87 531 478)">正义路</text><text x="1504" y="25" transform="rotate(84 1504 20)">北大街</text><text x="1512" y="250" transform="rotate(74 1512 245)">建国门南大街</text><text x="700" y="577" transform="rotate(88 700 572)">祈年大街</text><text x="1518" y="577">东</text><text x="1522" y="375">盔</text>
            </g>
            <g class="lbl s15">
              <text x="131" y="225" transform="rotate(-2 131 220)">西长安街</text><text x="199" y="210" transform="rotate(-2 199 205)">东长安街</text><text x="455" y="208" transform="rotate(-2 455 203)">东长安街</text><text x="606" y="201" transform="rotate(-2 606 196)">东长安街</text><text x="768" y="195" transform="rotate(-2 768 190)">东长安街</text>
              <text x="518" y="201">南河沿</text><text x="916" y="185">东单</text><text x="1075" y="177">建国门内大街</text><text x="1359" y="179">建国门内大街</text><text x="1233" y="168">北京站街</text><text x="1233" y="188">北口</text><text x="1484" y="170">建国门桥</text>
              <text x="526" y="38" transform="rotate(-87 526 33)">南河沿大街</text><text x="908" y="129" transform="rotate(87 908 124)">东单北大街</text><text x="1223" y="31" transform="rotate(87 1223 26)">门南小街</text><text x="1234" y="225" transform="rotate(87 1234 220)">北京站街</text>
              <text x="1153" y="350" transform="rotate(-35 1153 345)">北京站西街</text><text x="1009" y="474" transform="rotate(-40 1009 469)">北京站西街</text><text x="1304" y="335">北京站东街</text><text x="1499" y="330">北京站东街</text>
              <text x="1153" y="536">崇文门东大街</text><text x="1322" y="532">崇文门东大街</text><text x="1524" y="521">东</text><text x="1242" y="575" transform="rotate(88 1242 570)">北</text>
              <text x="140" y="387" transform="rotate(87 140 382)">广场西侧路</text><text x="269" y="422" transform="rotate(87 269 417)">广场东侧路</text><text x="15" y="549">局口</text><text x="102" y="554" transform="rotate(5 102 549)">前门西大街</text><text x="213" y="557" transform="rotate(-2 213 552)">前门东大街</text><text x="416" y="529" transform="rotate(-4 416 524)">前门东大街</text>
              <text x="524" y="517">正义路路</text><text x="524" y="536">口</text><text x="700" y="510">台基厂路</text><text x="700" y="531">口</text><text x="611" y="526" transform="rotate(-2 611 521)">前门东大街</text><text x="799" y="519" transform="rotate(-2 799 514)">崇文门西大街</text>
              <text x="921" y="389" transform="rotate(86 921 384)">崇文门内大街</text><text x="931" y="580" transform="rotate(88 931 575)">崇文门</text><text x="284" y="590" transform="rotate(55 284 585)">前门</text>
            </g>
            <g class="lbl s15 water"><text x="272" y="193" transform="rotate(-6 272 188)">外金水河</text><text x="353" y="187">菖蒲河</text><text x="284" y="99">玉带河</text></g>
            <g class="lbl s15 park"><text x="338" y="63">太子林</text><text x="70" y="83">园</text></g>
            <g class="lbl s15 shop"><text x="796" y="105">东方新天</text><text x="796" y="125">地</text><text x="1524" y="55">7</text></g>
            <g class="lbl s15 rail"><text x="1194" y="438">北京联络线</text><text x="1397" y="477">京沪线</text><text x="1043" y="503" transform="rotate(-15 1043 498)">京沪线</text></g>
            <g class="lbl s15 district"><text x="127" y="499" transform="rotate(88 127 494)">西城区</text></g>
            <g class="lbl s15 metro"><text x="327" y="230">天安门东</text><text x="9" y="247">西</text><text x="689" y="202">王府井</text><text x="946" y="206">东单</text><text x="1237" y="355">北京站</text><text x="1240" y="470">北京</text><text x="923" y="531">崇文门</text><text x="258" y="597">前门</text><text x="1516" y="193">建国</text></g>
            <g class="lbl s16 place"><text x="56" y="331">人民大</text><text x="56" y="353">会堂</text><text x="344" y="307">中国国</text><text x="344" y="329">家博物</text><text x="344" y="351">馆</text></g>
            <g class="lbl s22 place"><text x="200" y="242">北京市</text></g>
          </svg>

          <div class="zoom">
            <button type="button" aria-label="Zoom in"><svg viewBox="0 0 20 20" aria-hidden="true"><path d="M1 10h18M10 1v18"/></svg></button>
            <button type="button" aria-label="Zoom out"><svg viewBox="0 0 20 20" aria-hidden="true"><path d="M1 10h18"/></svg></button>
          </div>
          <button class="marker" type="button" aria-label="GeoComment marker"><svg viewBox="0 0 20 20" aria-hidden="true"><path d="M10 3c5 0 9 2.700 9 6.500S15 16 10 16c-1 0-2 0-3-.4C5.500 17 3.500 17.500 2 17.500c1-1 1.600-2.200 1.600-3.500C2 12.800 1 11.200 1 9.500 1 5.700 5 3 10 3Z"/></svg></button>
          <div class="attribution"><svg class="flag" viewBox="0 0 12 8" aria-hidden="true"><path fill="#4C7BE1" d="M0 0h12v4H0z"/><path fill="#FFD500" d="M0 4h12v3H0z"/><path fill="#E0BC00" d="M0 7h12v1H0z"/></svg> <a href="#">Leaflet</a> | © OpenStreetMap contributors</div>
        </div>
      </section>

      <div class="tabs" role="tablist">
        <button class="tab is-active" type="button" role="tab" aria-selected="true">My Content</button>
        <button class="tab" type="button" role="tab" aria-selected="false">Recommended</button>
      </div>

      <section class="card content">
        <article class="item">
          <div class="item-body">
            <div class="meta"><span class="badge badge-green">GeoComment</span><span class="created">Created: 4/23/2025, 7:06:25 PM</span></div>
            <p class="desc">This is a sample comment</p>
            <p class="pos">Position</p>
            <p class="coords"><span>Lat: 39.904200°</span><span>Lng: 116.407400°</span><span>Alt: 100.00m</span></p>
          </div>
          <div class="actions"><button class="btn btn-view" type="button">View Details</button><button class="btn btn-delete" type="button">Delete</button></div>
        </article>
        <article class="item">
          <div class="item-body">
            <div class="meta"><span class="badge badge-blue">GeoImage</span><span class="created">Created: 4/23/2025, 7:06:25 PM</span></div>
            <p class="desc">No description</p>
            <p class="pos">Position</p>
            <p class="coords"><span>Lat: 39.904200°</span><span>Lng: 116.407400°</span><span>Alt: 100.00m</span></p>
          </div>
          <div class="actions"><button class="btn btn-view" type="button">View Details</button><button class="btn btn-delete" type="button">Delete</button></div>
        </article>
      </section>
    </main>
  </div>
</div>
</body>
</html>
```
FILE: styles.css
```css
*, *::before, *::after { box-sizing: border-box; }

body {
  margin: 0;
  font-family: "Open Sans", "Noto Sans", sans-serif;
  font-size: 20px;
  line-height: 30px;
  color: #000;
  background: #f9fafb;
}

h1, h2, p { margin: 0; }
a { color: inherit; text-decoration: none; }
button { font: inherit; color: inherit; border: 0; padding: 0; background: none; cursor: pointer; }

.sprite { display: none; }
.icon { flex: none; fill: none; stroke: currentColor; stroke-width: 1.5; stroke-linecap: round; stroke-linejoin: round; }
.icon-nav { width: 27px; height: 27px; }
.icon-md { width: 30px; height: 30px; }
.icon-lg { width: 36px; height: 36px; }
.icon-bold { stroke-width: 2; }

.app { display: grid; grid-template-columns: 371px 1fr; height: 100vh; overflow: hidden; }

/* Sidebar */
.sidebar { background: #fff; border-right: 1px solid #e5e7eb; }
.brand { display: flex; align-items: center; gap: 12px; height: 85px; padding: 0 11px 10px; border-bottom: 1px solid #e5e7eb; font-size: 29px; font-weight: 700; }
.brand .icon { color: #22c55e; }
.nav { display: flex; flex-direction: column; gap: 6px; padding: 24px 24px 24px 11px; }
.nav-item { display: flex; align-items: center; gap: 12px; height: 54px; padding: 2px 24px 0; border-radius: 12px; font-weight: 600; }
.nav-item.is-active { background: #f0fdf4; color: #16a34a; }

/* Header */
.page { display: flex; flex-direction: column; min-width: 0; min-height: 0; }
.topbar { flex: none; display: flex; align-items: center; justify-content: flex-end; height: 86px; padding: 0 129px 10px 36px; background: #fff; border-bottom: 1px solid #e5e7eb; }
.profile { display: flex; align-items: center; gap: 8px; font-weight: 600; color: #374151; }

.main { flex: 1; min-height: 0; overflow-y: auto; scrollbar-width: none; padding: 38px 10px 36px 36px; }
.page-title { margin-bottom: 34px; font-size: 42px; line-height: 54px; font-weight: 700; }

.card { background: #fff; border-radius: 12px; box-shadow: 0 0 0 1px #e5e7eb, 0 2px 4px rgba(0, 0, 0, .08); }

/* Stats */
.stats { display: grid; grid-template-columns: repeat(4, 1fr); gap: 24px; }
.stat { display: flex; align-items: center; gap: 24px; height: 198px; padding: 0 60px; }
.stat-text { padding-top: 4px; }
.bubble { flex: none; display: grid; place-items: center; width: 72px; height: 72px; border-radius: 50%; }
.purple { background: #f3e8ff; color: #a855f7; }
.blue { background: #dbeafe; color: #3b82f6; }
.green { background: #dcfce7; color: #22c55e; }
.orange { background: #ffedd5; color: #f97316; }
.stat-label { color: #4b5563; }
.stat-value { font-size: 36px; line-height: 48px; font-weight: 700; }

/* Map */
.map-card { margin-top: 36px; padding: 60px; }
.map-head { display: flex; align-items: center; justify-content: space-between; height: 52px; margin-bottom: 20px; }
.section-title { font-size: 35px; line-height: 48px; font-weight: 700; }
.fit { display: flex; align-items: center; gap: 9px; padding: 0 15px; font-weight: 600; color: #374151; }
.map { position: relative; height: 600px; border-radius: 12px; overflow: hidden; }
.tiles { display: block; width: 100%; height: 100%; }
.bld { fill: #d9d0c9; stroke: #c4b6ab; stroke-width: 1; }
.casing { fill: none; stroke: #bbb; stroke-linejoin: round; stroke-linecap: round; }
.street { fill: none; stroke: #fff; stroke-linejoin: round; stroke-linecap: round; }
.foot { stroke: #fa8072; stroke-width: 2; stroke-dasharray: 4 4; }
.lbl { font-family: "Noto Sans CJK SC", sans-serif; text-anchor: middle; fill: #222; stroke: rgba(255, 255, 255, .6); stroke-width: 2; paint-order: stroke; }
.s12 { font-size: 12px; }
.s13 { font-size: 13px; }
.s15 { font-size: 15px; }
.s16 { font-size: 16px; }
.s22 { font-size: 22px; }
.water { fill: #4d80b3; }
.park { fill: #1f8a3a; }
.shop { fill: #cc2a2a; }
.rail { fill: #777; }
.district { fill: #9477a6; }
.metro { fill: #3b48a8; font-weight: 700; }
.place { fill: #444; }

.zoom { position: absolute; top: 15px; left: 15px; border: 3px solid rgba(0, 0, 0, .2); border-radius: 6px; background-clip: padding-box; }
.zoom button { display: grid; place-items: center; width: 45px; height: 45px; background: #fff; }
.zoom button:first-child { height: 46px; border-bottom: 1px solid #ccc; border-radius: 3px 3px 0 0; }
.zoom button:last-child { border-radius: 0 0 3px 3px; }
.zoom svg { width: 20px; height: 20px; fill: none; stroke: #000; stroke-width: 2; }

.marker { position: absolute; top: 50%; left: 50%; display: grid; place-items: center; width: 36px; height: 36px; margin: -18px; border-radius: 50%; background: #22c55e; }
.marker svg { width: 20px; height: 20px; fill: #fff; }

.attribution { position: absolute; right: 0; bottom: 0; padding: 0 8px; font: 18px/25px "Liberation Sans", Arial, sans-serif; color: #333; background: rgba(255, 255, 255, .8); }
.attribution a { color: #0078a8; }
.flag { width: 18px; height: 12px; }

/* Tabs */
.tabs { display: grid; grid-template-columns: 1fr 1fr; height: 60px; margin: 36px 0 12px; padding: 6px; border-radius: 12px; background: #f3f4f6; }
.tab { padding-top: 3px; border-radius: 9px; font-weight: 600; color: #6b7280; }
.tab.is-active { background: #fff; color: #030712; box-shadow: 0 1px 4px rgba(0, 0, 0, .1); }

/* Content list */
.content { display: flex; flex-direction: column; gap: 24px; padding: 60px; }
.item { display: flex; justify-content: space-between; gap: 24px; padding: 24px; border: 1px solid #e5e7eb; border-radius: 12px; }
.meta { display: flex; align-items: center; gap: 12px; height: 36px; margin-bottom: 14px; color: #4b5563; }
.created { padding-top: 3px; }
.badge { padding: 0 12px; border-radius: 9px; font-size: 17px; line-height: 36px; font-weight: 600; color: #fff; }
.badge-green { background: #22c55e; }
.badge-blue { background: #3b82f6; }
.desc { margin-bottom: 12px; font-size: 23px; line-height: 36px; color: #374151; }
.pos { margin-bottom: 4px; color: #4b5563; }
.coords { display: flex; gap: 6px; padding-left: 15px; line-height: 42px; font-weight: 600; color: #3b82f6; }
.actions { display: flex; flex-direction: column; gap: 12px; }
.btn { height: 48px; padding: 3px 15px 0; border-radius: 9px; font-weight: 600; text-align: left; }
.btn-view { background: #f0fdf4; color: #22c55e; }
.btn-delete { background: #fef2f2; color: #ef4444; }
```
